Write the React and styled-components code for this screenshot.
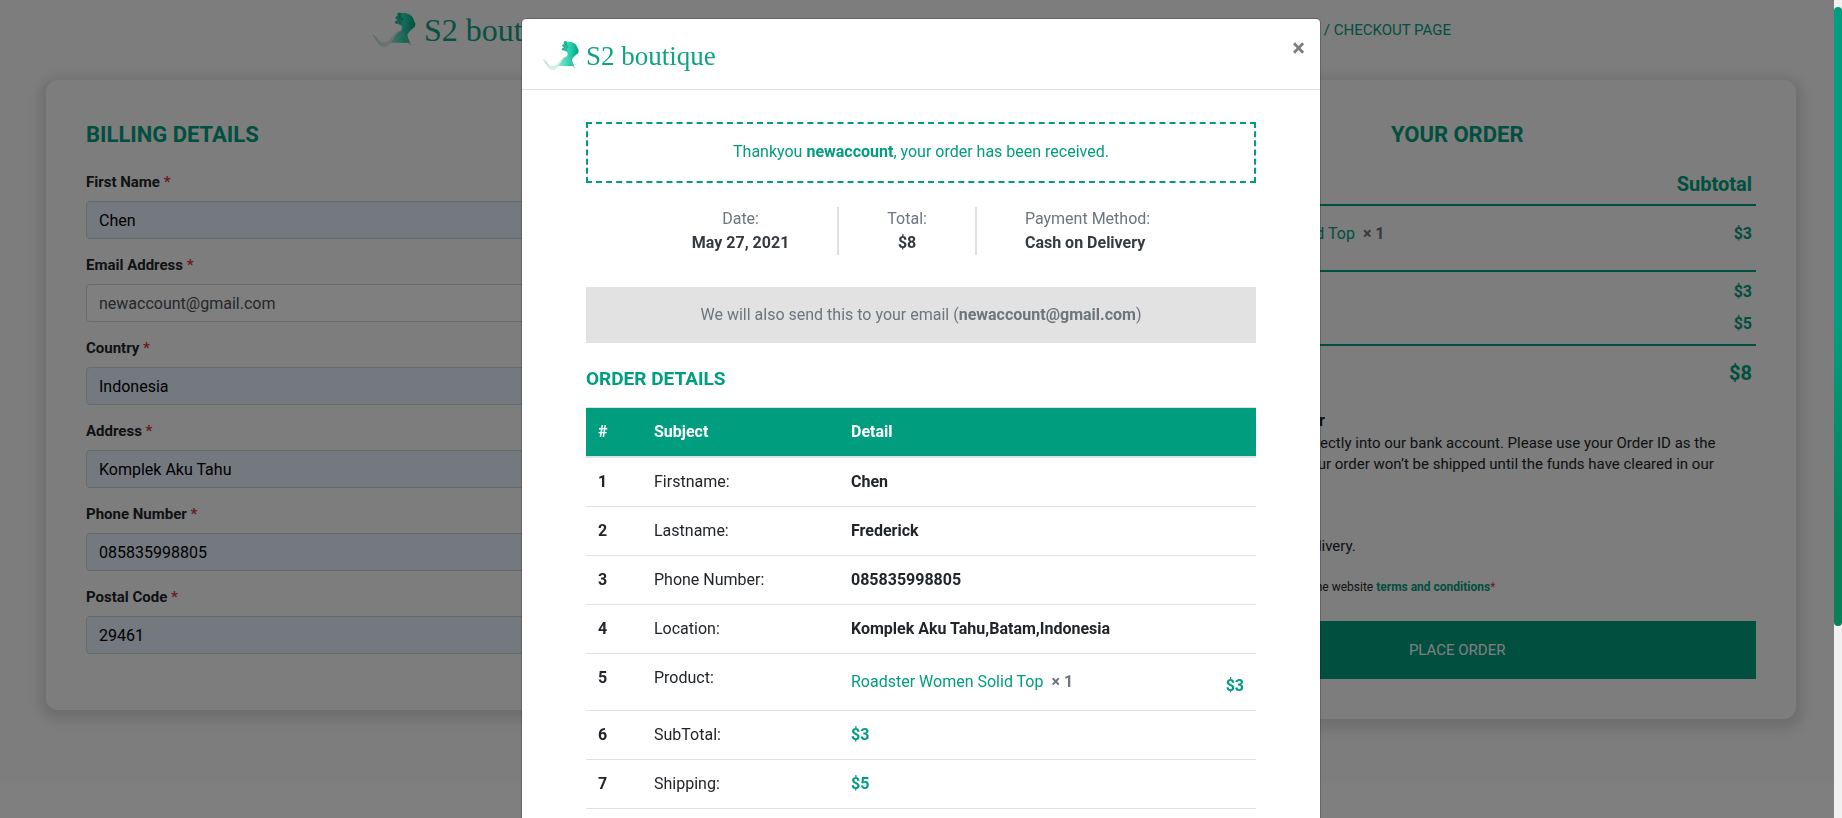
import React from "react";
import styled, { createGlobalStyle, css } from "styled-components";

const GREEN = "#009e7f";
const GREY = "#6c757d";
const LINE = "#dee2e6";

const GlobalStyle = createGlobalStyle`
  *, *::before, *::after { box-sizing: border-box; }
  html { overflow: hidden; }
  body {
    margin: 0;
    background: #fff;
    color: #212529;
    font-family: Roboto, "Liberation Sans", sans-serif;
    font-size: 16px;
    line-height: 24px;
  }
  a { color: ${GREEN}; text-decoration: none; }
  h2, h3, p { margin: 0; }
`;

/* ---------- Logo ---------- */

const LogoLink = styled.a`
  display: flex;
  align-items: center;
  gap: ${({ $large }) => ($large ? 7 : 6)}px;
`;

const LogoMark = styled.svg`
  display: block;
  width: ${({ $large }) => ($large ? 52 : 43)}px;
  height: ${({ $large }) => ($large ? 46 : 38)}px;
`;

const Wordmark = styled.span`
  padding-top: 4px;
  color: #0fa384;
  font-family: "Liberation Serif", serif;
  font-size: ${({ $large }) => ($large ? 32 : 27)}px;
  line-height: 32px;
`;

const WAVES = [0, 1, 2, 3, 4];

function Logo({ large, id }) {
  return (
    <LogoLink href="#home" $large={large}>
      <LogoMark $large={large} viewBox="0 0 52 46" aria-hidden="true">
        <defs>
          <linearGradient id={`${id}-head`} x1="0" y1="0" x2="1" y2="0.1">
            <stop offset="0" stopColor="#2fd0ac" />
            <stop offset="0.45" stopColor="#35dcb9" />
            <stop offset="1" stopColor="#06a583" />
          </linearGradient>
          <linearGradient id={`${id}-body`} x1="0" y1="0" x2="1" y2="0">
            <stop offset="0" stopColor="#8fe6d0" />
            <stop offset="0.5" stopColor="#3fdcba" />
            <stop offset="1" stopColor="#12b692" />
          </linearGradient>
        </defs>
        <path
          d="M35 8.4C40 7.4 46 8.8 48 13C48.8 14.6 49 16 50.4 18.6C50.8 19.6 50 20 50 20.6C50.1 21.8 49.8 22.2 49 22.6C48 23.4 46.4 24.6 45 26C43 28 42 29.4 42.4 31C43 33.4 43.8 35.4 44.6 37.6L26 37.6C29.4 34 31.4 30 34.4 27.6C36 26 37.4 24 37 22C36.6 20.4 34.6 20 34 18C33.4 14.6 33.6 10 35 8.4Z"
          fill={`url(#${id}-head)`}
        />
        <path
          d="M26 37.6C29.6 33.4 31.4 27 35.4 26.6C39.6 26.6 42.4 32.6 45 37.6Z"
          fill={`url(#${id}-body)`}
        />
        <g fill="#1fbd9b">
          <circle cx="34.4" cy="9.6" r="2.2" />
          <circle cx="32.4" cy="12.8" r="1.9" />
          <circle cx="35.4" cy="13.4" r="2.3" />
          <circle cx="31.8" cy="17.2" r="1.8" />
          <circle cx="35" cy="17.8" r="2" />
        </g>
        <g fill="#0a8f73">
          <circle cx="34.8" cy="11.4" r="0.8" />
          <circle cx="33.2" cy="15.4" r="0.8" />
          <circle cx="37.4" cy="14.6" r="0.8" />
        </g>
        <g fill="none" stroke="#7cc4b3" strokeWidth="0.4" opacity="0.8">
          {WAVES.map((n) => (
            <path
              key={n}
              d={`M8 ${30 + n * 0.2}C12 ${31 + n * 0.6} 13 ${38 + n} 19 ${38 + n}C26 ${38 + n} 29 ${26 + n} 35.5 ${26 + n}C41 ${26 + n} 42 ${37 + n * 0.5} 46 40`}
            />
          ))}
        </g>
      </LogoMark>
      <Wordmark $large={large}>S2 boutique</Wordmark>
    </LogoLink>
  );
}

/* ---------- Checkout page ---------- */

const Page = styled.div`
  padding-bottom: 64px;
  background: #fafafa;
`;

const TopBar = styled.header`
  display: flex;
  align-items: flex-start;
  justify-content: space-between;
  max-width: 1140px;
  height: 80px;
  margin: 0 auto;
  padding: 5px 40px 0 14px;
`;

const Breadcrumb = styled.nav`
  padding-top: 13px;
  color: ${GREEN};
  font-size: 15px;
  text-transform: uppercase;
`;

const Columns = styled.main`
  display: grid;
  grid-template-columns: 20fr 13fr;
  gap: 30px;
  align-items: start;
  padding: 0 46px;
`;

const Card = styled.section`
  padding: 40px;
  border-radius: 12px;
  background: #fafafa;
  box-shadow: 0 4px 12px 6px rgba(0, 24, 12, 0.13);
`;

const CardTitle = styled.h2`
  margin-bottom: 22px;
  color: ${GREEN};
  font-size: 22px;
  font-weight: 700;
  line-height: 30px;
  text-align: ${({ $center }) => ($center ? "center" : "left")};
  text-transform: uppercase;
`;

const Field = styled.div`
  margin-bottom: 16px;
`;

const Label = styled.label`
  display: block;
  margin-bottom: 8px;
  font-size: 15px;
  font-weight: 700;
  line-height: 21px;
`;

const Required = styled.span`
  color: #dc3545;
`;

const Input = styled.input`
  display: block;
  width: 100%;
  height: 38px;
  padding: 6px 12px;
  border: 1px solid #ced4da;
  border-radius: 4px;
  background: ${({ $filled }) => ($filled ? "#e8f0fe" : "#fff")};
  color: ${({ $filled }) => ($filled ? "#000" : "#495057")};
  font: inherit;
`;

const OrderTable = styled.table`
  width: 100%;
  margin-bottom: 24px;
  border-spacing: 0;
  color: ${GREEN};
  th, td { padding: 8px 4px 0; text-align: left; font-weight: 400; }
  th:last-child, td:last-child { text-align: right; font-weight: 700; }
`;

const ruled = css`border-bottom: 2px solid ${GREEN};`;

const OrderRow = styled.tr`
  ${({ $kind }) =>
    $kind === "head" &&
    css`&& > th { padding: 0 4px 8px; font-size: 20px; font-weight: 700; ${ruled} }`}
  ${({ $kind }) => $kind === "item" && css`&& > td { padding: 16px 4px 24px; ${ruled} }`}
  ${({ $kind }) => $kind === "last" && css`&& > td { padding-bottom: 8px; ${ruled} }`}
  ${({ $kind }) =>
    $kind === "total" && css`&& > td { padding-top: 15px; font-size: 20px; font-weight: 700; }`}
`;

const Quantity = styled.strong`
  margin-left: 8px;
  color: ${GREY};
  font-weight: 700;
`;

const PaymentOption = styled.div`
  margin-bottom: 16px;
`;

const OptionLabel = styled.label`
  display: flex;
  align-items: center;
  gap: 6px;
  font-weight: 700;
  input { margin: 0; }
`;

const OptionText = styled.p`
  padding-left: 10px;
  font-size: 15px;
  line-height: 21px;
`;

const Terms = styled.label`
  display: flex;
  align-items: center;
  gap: 10px;
  margin: 20px 0 24px;
  font-size: 12px;
  line-height: 20px;
  input { margin: 0; }
  a { font-weight: 700; }
`;

const PlaceOrder = styled.button`
  display: block;
  width: 100%;
  height: 58px;
  border: 0;
  background: ${GREEN};
  color: #fff;
  font: inherit;
  font-size: 15px;
  text-transform: uppercase;
`;

/* ---------- Modal ---------- */

const Backdrop = styled.div`
  position: fixed;
  inset: 0;
  overflow: hidden;
  padding-top: 18px;
  background: rgba(0, 0, 0, 0.5);
`;

const Dialog = styled.div`
  max-width: 800px;
  min-height: 100vh;
  margin: 0 auto;
  border: 1px solid rgba(0, 0, 0, 0.2);
  border-radius: 5px;
  background: #fff;
  background-clip: padding-box;
`;

const DialogHeader = styled.header`
  display: flex;
  align-items: flex-start;
  justify-content: space-between;
  padding: 16px 15px;
  border-bottom: 1px solid ${LINE};
`;

const CloseButton = styled.button`
  padding: 0;
  border: 0;
  background: none;
  color: #7f7f7f;
  font: inherit;
  font-size: 24px;
  font-weight: 700;
  line-height: 26px;
`;

const DialogBody = styled.div`
  padding: 32px 64px;
`;

const ThankYou = styled.p`
  padding: 17px 18px 19px;
  border: 2px dashed ${GREEN};
  color: ${GREEN};
  line-height: 21px;
  text-align: center;
`;

const Summary = styled.div`
  display: flex;
  justify-content: center;
  margin: 24px 0 32px;
`;

const SummaryItem = styled.div`
  padding: 0 48px;
  color: ${GREY};
  text-align: center;
  &:not(:last-child) { border-right: 2px solid #e0e0e0; }
  &:last-child { text-align: left; }
  strong { display: block; color: #343a40; }
`;

const EmailNote = styled.p`
  padding: 16px;
  background: #e2e2e2;
  color: ${GREY};
  text-align: center;
`;

const DetailsTitle = styled.h3`
  margin: 24px 0 16px;
  color: ${GREEN};
  font-size: 19px;
  font-weight: 700;
  line-height: 24px;
  text-transform: uppercase;
`;

const DetailsTable = styled.table`
  width: 100%;
  border-spacing: 0;
  th, td {
    padding: 12px;
    border-bottom: 1px solid ${LINE};
    text-align: left;
    vertical-align: top;
  }
  th:nth-child(1) { width: 56px; }
  th:nth-child(2) { width: 197px; }
  thead th {
    border-top: 1px solid ${LINE};
    border-bottom-width: 2px;
    background: ${GREEN};
    background-clip: padding-box;
    color: #fff;
  }
  td:nth-child(3) { font-weight: 700; }
`;

const Price = styled.span`
  color: ${GREEN};
  font-weight: 700;
`;

const ProductLine = styled.div`
  display: flex;
  justify-content: space-between;
  font-weight: 400;
  > span { padding-top: 4px; }
  > ${Price} { padding-top: 8px; }
`;

/* ---------- Scroll indicator ---------- */

const ScrollTrack = styled.div`
  position: fixed;
  top: 0;
  right: 0;
  bottom: 0;
  width: 8px;
  padding-top: 7px;
  background: #f1f1f1;
`;

const ScrollThumb = styled.div`
  height: calc(76% + 3px);
  border-radius: 4px;
  background: linear-gradient(${GREEN} 50%, #06815a 85%);
`;

const fields = [
  { id: "first-name", label: "First Name", value: "Chen", filled: true },
  { id: "email", label: "Email Address", value: "newaccount@gmail.com", filled: false },
  { id: "country", label: "Country", value: "Indonesia", filled: true },
  { id: "address", label: "Address", value: "Komplek Aku Tahu", filled: true },
  { id: "phone", label: "Phone Number", value: "085835998805", filled: true },
  { id: "postal", label: "Postal Code", value: "29461", filled: true },
];

const details = [
  ["Firstname:", "Chen"],
  ["Lastname:", "Frederick"],
  ["Phone Number:", "085835998805"],
  ["Location:", "Komplek Aku Tahu,Batam,Indonesia"],
  [
    "Product:",
    <ProductLine key="product">
      <span>
        <a href="#product">Roadster Women Solid Top</a>
        <Quantity>× 1</Quantity>
      </span>
      <Price>$3</Price>
    </ProductLine>,
  ],
  ["SubTotal:", <Price key="subtotal">$3</Price>],
  ["Shipping:", <Price key="shipping">$5</Price>],
];

function BillingCard() {
  return (
    <Card>
      <CardTitle>Billing Details</CardTitle>
      {fields.map((f) => (
        <Field key={f.id}>
          <Label htmlFor={f.id}>
            {f.label} <Required>*</Required>
          </Label>
          <Input id={f.id} defaultValue={f.value} $filled={f.filled} />
        </Field>
      ))}
    </Card>
  );
}

function OrderCard() {
  return (
    <Card>
      <CardTitle $center>Your Order</CardTitle>
      <OrderTable>
        <thead>
          <OrderRow $kind="head"><th>Product</th><th>Subtotal</th></OrderRow>
        </thead>
        <tbody>
          <OrderRow $kind="item">
            <td>
              <a href="#product">Roadster Women Solid Top</a>
              <Quantity>× 1</Quantity>
            </td>
            <td>$3</td>
          </OrderRow>
          <OrderRow><td>Subtotal</td><td>$3</td></OrderRow>
          <OrderRow $kind="last"><td>Shipping</td><td>$5</td></OrderRow>
          <OrderRow $kind="total"><td>Total</td><td>$8</td></OrderRow>
        </tbody>
      </OrderTable>
      <PaymentOption>
        <OptionLabel>
          <input type="radio" name="payment" />
          Direct Bank Transfer
        </OptionLabel>
        <OptionText>
          Make your payment directly into our bank account. Please use your Order ID as the
          payment reference. Your order won’t be shipped until the funds have cleared in our
          account.
        </OptionText>
      </PaymentOption>
      <PaymentOption>
        <OptionLabel>
          <input type="radio" name="payment" defaultChecked />
          Cash on Delivery
        </OptionLabel>
        <OptionText>Pay with cash upon delivery.</OptionText>
      </PaymentOption>
      <Terms>
        <input type="checkbox" defaultChecked />
        <span>
          I have read and agree to the website <a href="#terms">terms and conditions</a>
          <Required>*</Required>
        </span>
      </Terms>
      <PlaceOrder type="button">Place Order</PlaceOrder>
    </Card>
  );
}

function OrderModal() {
  return (
    <Backdrop>
      <Dialog role="dialog" aria-modal="true" aria-label="Order received">
        <DialogHeader>
          <Logo id="modal-logo" />
          <CloseButton type="button" aria-label="Close">×</CloseButton>
        </DialogHeader>
        <DialogBody>
          <ThankYou>
            Thankyou <strong>newaccount</strong>, your order has been received.
          </ThankYou>
          <Summary>
            <SummaryItem>Date:<strong>May 27, 2021</strong></SummaryItem>
            <SummaryItem>Total:<strong>$8</strong></SummaryItem>
            <SummaryItem>Payment Method:<strong>Cash on Delivery</strong></SummaryItem>
          </Summary>
          <EmailNote>
            We will also send this to your email (<strong>newaccount@gmail.com</strong>)
          </EmailNote>
          <DetailsTitle>Order Details</DetailsTitle>
          <DetailsTable>
            <thead>
              <tr><th>#</th><th>Subject</th><th>Detail</th></tr>
            </thead>
            <tbody>
              {details.map(([subject, detail], i) => (
                <tr key={subject}>
                  <th scope="row">{i + 1}</th>
                  <td>{subject}</td>
                  <td>{detail}</td>
                </tr>
              ))}
            </tbody>
          </DetailsTable>
        </DialogBody>
      </Dialog>
    </Backdrop>
  );
}

export default function App() {
  return (
    <>
      <GlobalStyle />
      <Page>
        <TopBar>
          <Logo large id="page-logo" />
          <Breadcrumb aria-label="Breadcrumb">/ Checkout Page</Breadcrumb>
        </TopBar>
        <Columns>
          <BillingCard />
          <OrderCard />
        </Columns>
      </Page>
      <OrderModal />
      <ScrollTrack><ScrollThumb /></ScrollTrack>
    </>
  );
}
